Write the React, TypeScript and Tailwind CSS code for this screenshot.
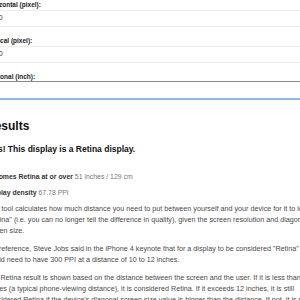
import React from 'react';

const fields = [
  { label: 'Horizontal (pixel):', value: '1920', focused: false },
  { label: 'Vertical (pixel):', value: '1080', focused: false },
  { label: 'Diagonal (inch):', value: '', focused: true },
];

const App: React.FC = () => {
  return (
    <div className="w-[300px] h-[300px] overflow-hidden bg-white font-['Liberation_Sans',Arial,sans-serif]">
      <div className="-ml-[14px] w-[332px] pt-[1px]">
        {/* Inputs */}
        <div className="flex flex-col gap-[10px]">
          {fields.map((f, i) => (
            <div key={i} className="flex flex-col">
              <label className="text-[6.5px] leading-[8px] font-bold text-[#222] mb-[1px]">{f.label}</label>
              {f.focused ? (
                <div className="h-[19px] -mt-[1px] border-t border-t-[#4c97f2] border-b-2 border-b-[#8db5ee]" />
              ) : (
                <div className="h-[17px] border-y border-[#eeeeee] flex items-center pl-[1px] text-[7px] text-[#333]">
                  {f.value}
                </div>
              )}
            </div>
          ))}
        </div>

        {/* Results */}
        <h2 className="mt-[19px] text-[12px] leading-[15px] font-bold text-[#111]">Results</h2>
        <p className="mt-[10px] ml-[2px] text-[8.5px] leading-[11px] font-bold text-[#111]">
          Yes! This display is a Retina display.
        </p>
        <p className="mt-[16px] text-[6.9px] leading-[11px] text-[#777]">
          <span className="font-bold text-[#333]">Becomes Retina at or over</span> 51 inches / 129 cm
        </p>
        <p className="mt-[5px] text-[6.9px] leading-[11px] text-[#777]">
          <span className="font-bold text-[#333]">Display density</span> 67.78 PPI
        </p>

        <div className="mt-[5px] flex flex-col gap-[7px] text-[7.2px] leading-[11px] text-[#4a4a4a]">
          <p>
            This tool calculates how much distance you need to put between yourself and your device for it to look
            "Retina" (i.e. you can no longer tell the difference in quality), given the screen resolution and
            diagonal screen size.
          </p>
          <p>
            For reference, Steve Jobs said in the iPhone 4 keynote that for a display to be considered "Retina" it
            would need to have 300 PPI at a distance of 10 to 12 inches.
          </p>
          <p>
            The Retina result is shown based on the distance between the screen and the user. If it is less than 10
            inches (a typical phone-viewing distance), it is considered Retina. If it exceeds 12 inches, it is still
            considered Retina if the device's diagonal screen size value is bigger than the distance. If not, it is
            not considered Retina.
          </p>
        </div>
      </div>
    </div>
  );
};

export default App;
